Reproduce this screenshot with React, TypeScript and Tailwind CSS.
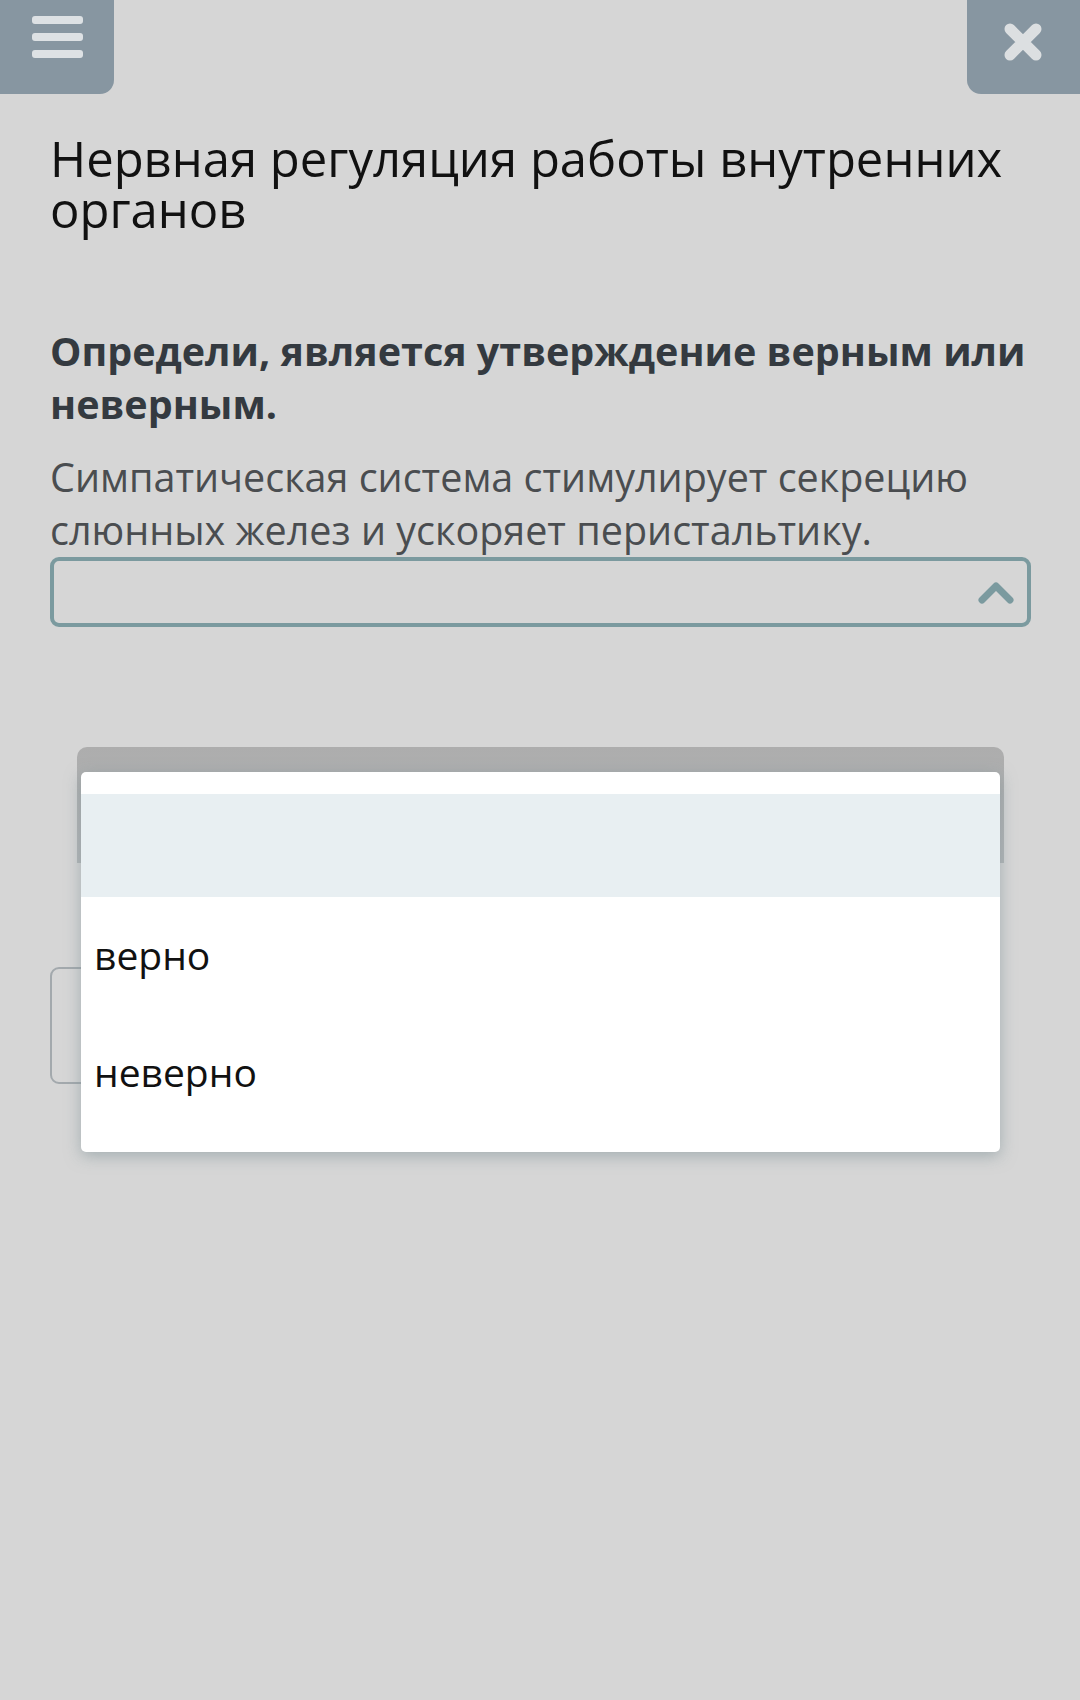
import React from "react";

export default function App() {
  return (
    <div className="relative w-[1080px] h-[1700px] overflow-hidden bg-[#d6d6d6] font-['Open_Sans','Noto_Sans',sans-serif]">
      {/* Top bar */}
      <div className="flex justify-between">
        <div className="w-[114px] h-[94px] bg-[#8796a1] rounded-br-[14px] flex flex-col items-center justify-center gap-[9px] pb-[20px] pl-[1px]">
          <div className="w-[51px] h-[8px] rounded-[3px] bg-[#dde1e4]" />
          <div className="w-[51px] h-[8px] rounded-[3px] bg-[#dde1e4]" />
          <div className="w-[51px] h-[8px] rounded-[3px] bg-[#dde1e4]" />
        </div>
        <div className="w-[113px] h-[94px] bg-[#8796a1] rounded-bl-[14px] flex items-start justify-center pt-[21px] pr-[2px]">
          <svg width="42" height="42" viewBox="0 0 42 42">
            <path d="M8 8 L34 34 M34 8 L8 34" stroke="#dcdfe1" strokeWidth="11" strokeLinecap="round" />
          </svg>
        </div>
      </div>

      <div className="px-[50px]">
        <h1 className="mt-[39px] text-[49px] leading-[51px] text-[#111] font-normal">
          Нервная регуляция работы внутренних органов
        </h1>

        <p className="mt-[90px] text-[39.5px] leading-[53px] font-bold text-[#343a40] whitespace-nowrap">
          Определи, является утверждение верным или
          <br />
          неверным.
        </p>
        <p className="mt-[20px] text-[39.5px] leading-[53px] text-[#4a4d50]">
          Симпатическая система стимулирует секрецию слюнных желез и ускоряет перистальтику.
        </p>

        <div className="mt-0 h-[70px] w-[981px] border-[4px] border-[#7b9a9f] rounded-[9px] flex items-center justify-end pr-[12px]">
          <svg width="38" height="26" viewBox="0 0 38 26">
            <path d="M5 21 L19 7 L33 21" stroke="#7b9a9f" strokeWidth="7" fill="none" strokeLinecap="round" strokeLinejoin="round" />
          </svg>
        </div>

        {/* Button behind overlay */}
        <div className="mt-[340px] w-[200px] h-[117px] border-[2px] border-[#a3a9ad] rounded-[9px]" />
      </div>

      {/* Dropdown overlay frame */}
      <div className="absolute left-[77px] top-[747px] w-[927px] h-[116px] rounded-t-[10px] bg-[linear-gradient(#adadad,#b3b6b8)]" />
      <div className="absolute left-[81px] top-[772px] w-[919px] h-[380px] bg-white rounded-[5px] shadow-[0_4px_16px_rgba(120,140,145,0.55)] pt-[22px]">
        <div className="h-[103px] bg-[#e8eff2]" />
        <div className="h-[117px] flex items-center pl-[13px] text-[39px] text-[#111]">верно</div>
        <div className="h-[117px] flex items-center pl-[13px] text-[39px] text-[#111]">неверно</div>
      </div>
    </div>
  );
}
